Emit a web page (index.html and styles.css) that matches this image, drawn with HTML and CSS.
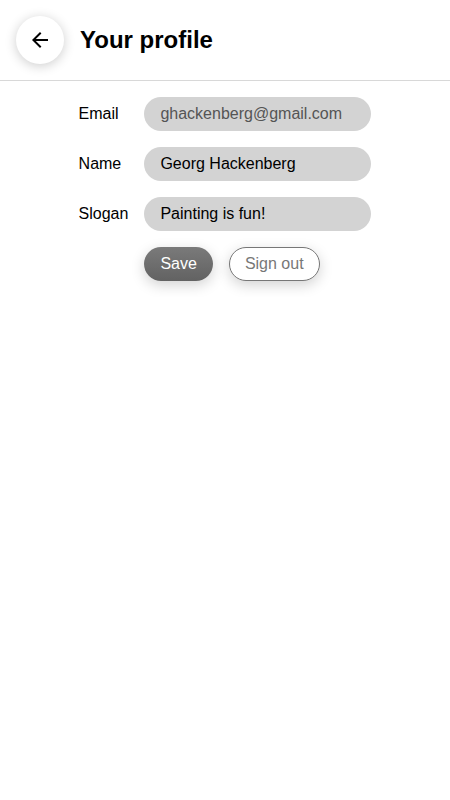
FILE: index.html
```html
<!DOCTYPE html>
<html>
<head>
<meta charset="utf-8">
<link rel="stylesheet" href="styles.css">
</head>
<body>
<header class="header">
  <button class="back">
    <svg width="24" height="24" viewBox="0 0 24 24"><path d="M20 11H7.83l5.59-5.59L12 4l-8 8 8 8 1.41-1.41L7.83 13H20v-2z" fill="#000"/></svg>
  </button>
  <h1 class="title">Your profile</h1>
</header>
<main class="form">
  <label class="label">Email</label>
  <input class="input" value="ghackenberg@gmail.com" disabled>
  <label class="label">Name</label>
  <input class="input" value="Georg Hackenberg">
  <label class="label">Slogan</label>
  <input class="input" value="Painting is fun!">
  <div></div>
  <div class="actions">
    <button class="btn primary">Save</button>
    <button class="btn secondary">Sign out</button>
  </div>
</main>
</body>
</html>
```
FILE: styles.css
```css
* { box-sizing: border-box; }
body {
  margin: 0;
  font-family: "Liberation Sans", Arial, sans-serif;
  background: #fff;
  color: #000;
}
.header {
  display: flex;
  align-items: center;
  gap: 16px;
  padding: 16px;
  border-bottom: 1px solid #d8d8d8;
}
.back {
  width: 48px;
  height: 48px;
  border-radius: 50%;
  border: none;
  background: #fff;
  box-shadow: 0 2px 12px rgba(0,0,0,0.2);
  display: flex;
  align-items: center;
  justify-content: center;
  padding: 0;
}
.title {
  margin: 0;
  font-size: 24px;
  font-weight: bold;
}
.form {
  display: grid;
  grid-template-columns: auto 227px;
  justify-content: center;
  column-gap: 16px;
  row-gap: 16px;
  padding: 16px;
  align-items: center;
}
.label {
  font-size: 16px;
}
.input {
  height: 34px;
  border: none;
  border-radius: 17px;
  background: #d3d3d3;
  padding: 0 16px;
  font-family: inherit;
  font-size: 16px;
  color: #000;
  outline: none;
}
.input:disabled {
  color: #555;
}
.actions {
  display: flex;
  gap: 16px;
}
.btn {
  height: 34px;
  border-radius: 17px;
  font-family: inherit;
  font-size: 16px;
  padding: 0 16px;
  box-shadow: 0 4px 14px rgba(0,0,0,0.18);
}
.primary {
  border: none;
  background: linear-gradient(#7a7a7a, #626262);
  color: #fff;
}
.secondary {
  padding: 0 15px;
  border: 1px solid #777;
  background: #fff;
  color: #777;
}
```
